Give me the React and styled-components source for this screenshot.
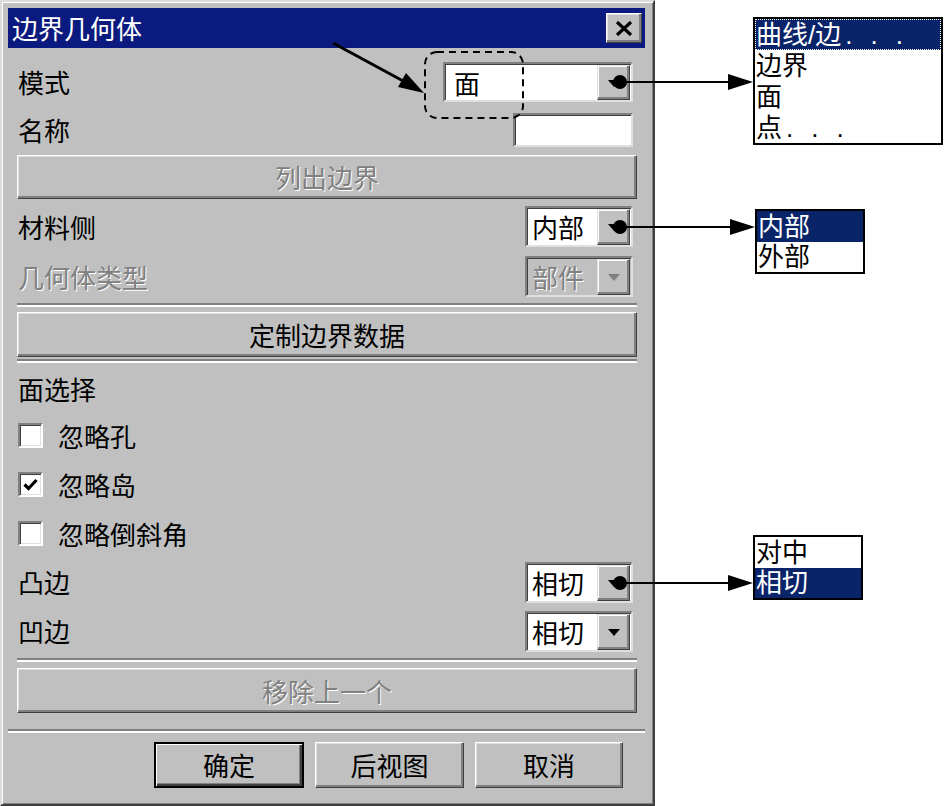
import React from 'react';
import styled, { createGlobalStyle, css } from 'styled-components';

const GlobalStyle = createGlobalStyle`
  html, body { margin: 0; padding: 0; background: #ffffff; }
  body { font-family: "Noto Sans CJK SC", "Noto Sans", sans-serif; }
  * { box-sizing: border-box; }
`;

const FONT = `"Noto Sans CJK SC", "Noto Sans", sans-serif`;
const LIST_FONT = `"Liberation Sans", "Noto Sans CJK SC", sans-serif`;
const NAVY = '#0a246a';

const Page = styled.div`
  position: relative;
  width: 944px;
  height: 806px;
  overflow: hidden;
  background: #fff;
  display: flex;
  align-items: flex-start;
  font-family: ${FONT};
`;

const Dialog = styled.div`
  width: 655px;
  height: 806px;
  background: #c0c0c0;
  border-top: 2px solid #dcdcdc;
  border-left: 2px solid #dcdcdc;
  border-right: 2px solid #404040;
  border-bottom: 2px solid #404040;
  box-shadow: inset 1px 1px 0 #ffffff, inset -1px -1px 0 #808080;
  padding: 6px 8px 0 6px;
  display: flex;
  flex-direction: column;
`;

const TitleBar = styled.div`
  height: 40px;
  background: #0b1a7e;
  display: flex;
  align-items: center;
  justify-content: space-between;
  padding: 0 3px 0 4px;
`;

const TitleText = styled.span`
  color: #fff;
  font-size: 26px;
  line-height: 1;
`;

const CloseButton = styled.div`
  width: 36px;
  height: 30px;
  background: #c0c0c0;
  border: 1px solid;
  border-color: #ffffff #404040 #404040 #ffffff;
  box-shadow: inset -2px -2px 0 #808080, inset 1px 1px 0 #dfdfdf;
  display: flex;
  align-items: center;
  justify-content: center;
`;

const Body = styled.div`
  display: flex;
  flex-direction: column;
  padding: 0 8px 0 9px;
`;

const Row = styled.div`
  display: flex;
  align-items: center;
  justify-content: space-between;
  height: ${(p) => p.$h}px;
  margin-top: ${(p) => p.$mt || 0}px;
`;

const Label = styled.span`
  font-size: 26px;
  line-height: 1;
  padding-left: 1px;
  color: ${(p) => (p.$disabled ? '#808080' : '#000')};
  ${(p) => p.$disabled && css`text-shadow: 1px 1px 0 #ffffff;`}
`;

const Separator = styled.div`
  height: 4px;
  border-top: 2px solid #808080;
  border-bottom: 2px solid #ffffff;
  margin: ${(p) => p.$m};
`;

const Button = styled.div`
  height: ${(p) => p.$h || 45}px;
  width: ${(p) => (p.$w ? `${p.$w}px` : 'auto')};
  margin-top: ${(p) => p.$mt || 0}px;
  background: #c0c0c0;
  border: 1px solid;
  border-color: #ffffff #404040 #404040 #ffffff;
  box-shadow: inset -2px -2px 0 #808080, inset 1px 1px 0 #dfdfdf;
  display: flex;
  align-items: center;
  justify-content: center;
  font-size: 26px;
  line-height: 1;
  color: ${(p) => (p.$disabled ? '#808080' : '#000')};
  ${(p) => p.$disabled && css`text-shadow: 1px 1px 0 #ffffff;`}
  ${(p) =>
    p.$default &&
    css`
      border: 2px solid #000;
      box-shadow: inset 1px 1px 0 #ffffff, inset -2px -2px 0 #404040, inset -3px -3px 0 #808080;
    `}
`;

const Combo = styled.div`
  width: ${(p) => p.$w}px;
  height: ${(p) => p.$h}px;
  margin-right: 4px;
  display: flex;
  border: 2px solid;
  border-color: #808080 #dfdfdf #dfdfdf #808080;
  box-shadow: inset 1px 1px 0 #404040;
  padding: 1px 1px 0 1px;
  background: ${(p) => (p.$disabled ? '#c0c0c0' : '#ffffff')};
`;

const ComboField = styled.div`
  flex: 1;
  display: flex;
  align-items: center;
  padding-left: ${(p) => p.$pl || 4}px;
  font-size: 26px;
  line-height: 1;
  color: ${(p) => (p.$disabled ? '#808080' : '#000')};
  ${(p) => p.$disabled && css`text-shadow: 1px 1px 0 #ffffff;`}
`;

const DropButton = styled.div`
  width: 33px;
  background: #c0c0c0;
  border: 1px solid;
  border-color: #dfdfdf #404040 #404040 #dfdfdf;
  box-shadow: inset -2px -2px 0 #808080, inset 1px 1px 0 #ffffff;
  display: flex;
  align-items: center;
  justify-content: center;
`;

const DownTriangle = styled.span`
  width: 0;
  height: 0;
  border-left: 6px solid transparent;
  border-right: 6px solid transparent;
  border-top: 7px solid ${(p) => (p.$disabled ? '#808080' : '#000')};
  margin-top: 1px;
`;

const TextInput = styled.div`
  width: 120px;
  height: 34px;
  margin-right: 4px;
  background: #fff;
  border: 2px solid;
  border-color: #808080 #dfdfdf #dfdfdf #808080;
  box-shadow: inset 1px 1px 0 #404040;
`;

const CheckRow = styled.div`
  display: flex;
  align-items: center;
  gap: 14px;
  height: 49px;
  padding-left: 1px;
`;

const CheckBox = styled.div`
  width: 25px;
  height: 25px;
  background: #fff;
  border: 2px solid;
  border-color: #808080 #ffffff #ffffff #808080;
  box-shadow: inset 1px 1px 0 #404040, inset -1px -1px 0 #dfdfdf;
  display: flex;
  align-items: center;
  justify-content: center;
`;

const Footer = styled.div`
  display: flex;
  flex-direction: column;
`;

const FooterButtons = styled.div`
  display: flex;
  justify-content: flex-end;
  gap: 11px;
  padding-right: 22px;
  margin-top: 9px;
`;

const Callout = styled.div`
  position: absolute;
  left: ${(p) => p.$x}px;
  top: ${(p) => p.$y}px;
  width: ${(p) => p.$w}px;
  background: #fff;
  border: 2px solid #000;
  display: flex;
  flex-direction: column;
  font-family: ${LIST_FONT};
`;

const CalloutItem = styled.div`
  height: ${(p) => p.$h}px;
  display: flex;
  align-items: center;
  padding-left: 1px;
  font-size: 26px;
  line-height: 1;
  color: ${(p) => (p.$active ? '#fff' : '#000')};
  background: ${(p) => (p.$active ? NAVY : '#fff')};
  ${(p) => p.$focus && css`outline: 1px dotted #ffffff; outline-offset: -1px;`}
`;

const Dots = styled.span`
  letter-spacing: 18px;
  margin-left: 4px;
`;

const Annotations = styled.svg`
  position: absolute;
  left: 0;
  top: 0;
  pointer-events: none;
`;

function ComboBox({ w, h, value, disabled }) {
  return (
    <Combo $w={w} $h={h} $disabled={disabled}>
      <ComboField $disabled={disabled} $pl={w > 150 ? 8 : 4}>{value}</ComboField>
      <DropButton>
        <DownTriangle $disabled={disabled} />
      </DropButton>
    </Combo>
  );
}

function Check({ checked, label }) {
  return (
    <CheckRow>
      <CheckBox>
        {checked && (
          <svg width="15" height="13" viewBox="0 0 15 13">
            <path d="M1.5 6.5 L5.5 10.5 L13.5 2" stroke="#000" strokeWidth="3.2" fill="none" />
          </svg>
        )}
      </CheckBox>
      <Label>{label}</Label>
    </CheckRow>
  );
}

function Arrow({ y, tip }) {
  return (
    <g>
      <circle cx="620" cy={y} r="7" fill="#000" />
      <line x1="620" y1={y} x2={tip - 20} y2={y} stroke="#000" strokeWidth="2" />
      <polygon points={`${tip - 25},${y - 8} ${tip},${y} ${tip - 25},${y + 8}`} fill="#000" />
    </g>
  );
}

export default function App() {
  return (
    <Page>
      <GlobalStyle />
      <Dialog>
        <TitleBar>
          <TitleText>边界几何体</TitleText>
          <CloseButton>
            <svg width="18" height="15" viewBox="0 0 18 15">
              <path d="M2 1 L16 14 M16 1 L2 14" stroke="#000" strokeWidth="3.2" />
            </svg>
          </CloseButton>
        </TitleBar>
        <Body>
          <Row $h={50} $mt={9}>
            <Label>模式</Label>
            <ComboBox w={190} h={40} value="面" />
          </Row>
          <Row $h={45}>
            <Label>名称</Label>
            <TextInput />
          </Row>
          <Button $mt={3} $h={44} $disabled>列出边界</Button>
          <Row $h={51} $mt={2}>
            <Label>材料侧</Label>
            <ComboBox w={108} h={41} value="内部" />
          </Row>
          <Row $h={49}>
            <Label $disabled>几何体类型</Label>
            <ComboBox w={108} h={41} value="部件" disabled />
          </Row>
          <Separator $m="2px 0 5px" />
          <Button $h={45}>定制边界数据</Button>
          <Separator $m="2px 0 4px" />
          <Row $h={44}>
            <Label>面选择</Label>
          </Row>
          <Check label="忽略孔" />
          <Check label="忽略岛" checked />
          <Check label="忽略倒斜角" />
          <Row $h={48}>
            <Label>凸边</Label>
            <ComboBox w={108} h={41} value="相切" />
          </Row>
          <Row $h={50}>
            <Label>凹边</Label>
            <ComboBox w={108} h={41} value="相切" />
          </Row>
          <Separator $m="2px 0 6px" />
          <Button $h={45} $disabled>移除上一个</Button>
        </Body>
        <Footer>
          <Separator $m="16px 0 0" />
          <FooterButtons>
            <Button $w={150} $h={46} $default>确定</Button>
            <Button $w={149} $h={46}>后视图</Button>
            <Button $w={148} $h={46}>取消</Button>
          </FooterButtons>
        </Footer>
      </Dialog>

      <Callout $x={753} $y={17} $w={190}>
        <CalloutItem $h={31} $active $focus>曲线/边<Dots>...</Dots></CalloutItem>
        <CalloutItem $h={31}>边界</CalloutItem>
        <CalloutItem $h={31}>面</CalloutItem>
        <CalloutItem $h={31}>点<Dots>...</Dots></CalloutItem>
      </Callout>

      <Callout $x={755} $y={209} $w={110}>
        <CalloutItem $h={31} $active>内部</CalloutItem>
        <CalloutItem $h={30}>外部</CalloutItem>
      </Callout>

      <Callout $x={753} $y={535} $w={110}>
        <CalloutItem $h={31}>对中</CalloutItem>
        <CalloutItem $h={30} $active>相切</CalloutItem>
      </Callout>

      <Annotations width="944" height="806" viewBox="0 0 944 806">
        <rect x="425" y="52" width="98" height="66" rx="12" ry="12" fill="none" stroke="#000" strokeWidth="2" strokeDasharray="7 5" />
        <line x1="333" y1="43" x2="405" y2="82" stroke="#000" strokeWidth="3" />
        <polygon points="424,93 398,87 406,73" fill="#000" />
        <Arrow y={82} tip={753} />
        <Arrow y={227} tip={755} />
        <Arrow y={583} tip={753} />
      </Annotations>
    </Page>
  );
}
